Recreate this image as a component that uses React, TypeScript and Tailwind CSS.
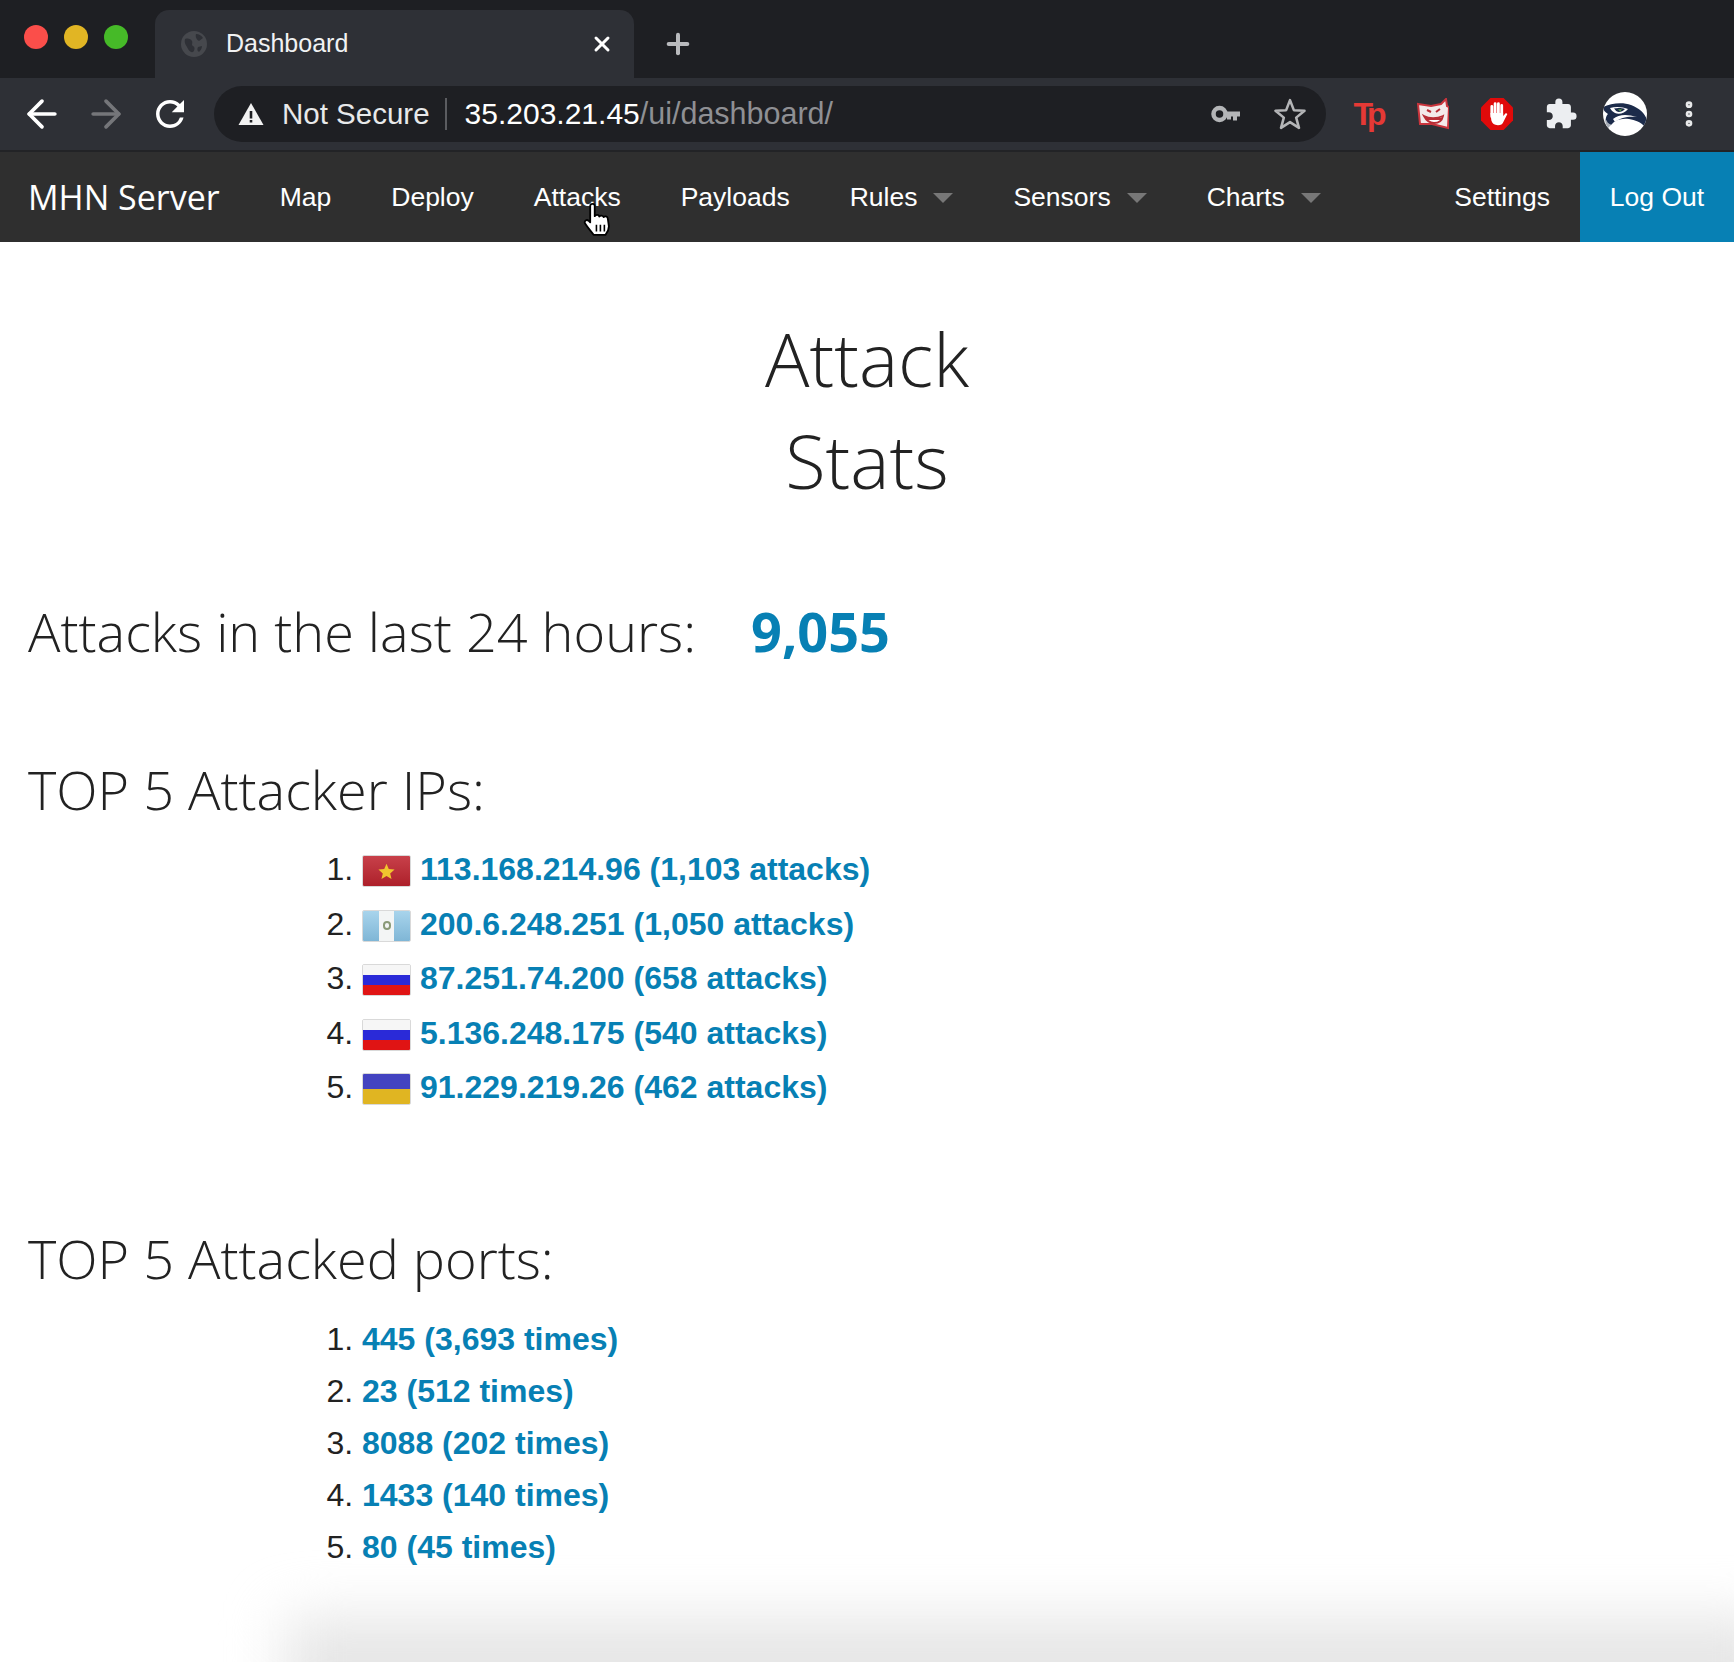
import { ArrowLeft, ArrowRight, Plus, X, EllipsisVertical } from 'lucide-react';
import { MdExtension, MdRefresh } from 'react-icons/md';

const sans = "font-['Liberation_Sans',Arial,sans-serif]";
const open = "font-['Open_Sans',sans-serif]";

const attackers = [
    { flag: 'vn', label: '113.168.214.96 (1,103 attacks)' },
    { flag: 'gt', label: '200.6.248.251 (1,050 attacks)' },
    { flag: 'ru', label: '87.251.74.200 (658 attacks)' },
    { flag: 'ru', label: '5.136.248.175 (540 attacks)' },
    { flag: 'ua', label: '91.229.219.26 (462 attacks)' },
];

const ports = ['445 (3,693 times)', '23 (512 times)', '8088 (202 times)', '1433 (140 times)', '80 (45 times)'];

function Flag({ kind }: { kind: string }) {
    return (
        <span className="relative mr-[9px] inline-block h-[32px] w-[49px] overflow-hidden rounded-[2px] border border-black/15 align-[-7px]">
            {kind === 'vn' && (
                <span className="flex h-full w-full items-center justify-center bg-gradient-to-b from-[#c8404a] to-[#ad1f2a]">
                    <svg width="17" height="17" viewBox="0 0 24 24">
                        <path d="M12 1l3.2 7.600 8.200.7-6.200 5.400 1.900 8L12 18.500l-7.100 4.200 1.900-8L.6 9.300l8.200-.7z" fill="#f0c52e" />
                    </svg>
                </span>
            )}
            {kind === 'gt' && (
                <span className="flex h-full w-full">
                    <span className="flex-1 bg-gradient-to-b from-[#a8d4ec] to-[#7fb6d6]" />
                    <span className="flex flex-1 items-center justify-center bg-[#f3f5f5]">
                        <span className="h-[9px] w-[8px] rounded-full border-2 border-[#8a9a78]" />
                    </span>
                    <span className="flex-1 bg-gradient-to-b from-[#a8d4ec] to-[#7fb6d6]" />
                </span>
            )}
            {kind === 'ru' && (
                <span className="flex h-full w-full flex-col">
                    <span className="flex-1 bg-[#f6f6f6]" />
                    <span className="flex-1 bg-[#2a2ad8]" />
                    <span className="flex-1 bg-[#e01414]" />
                </span>
            )}
            {kind === 'ua' && (
                <span className="flex h-full w-full flex-col">
                    <span className="flex-1 bg-[#4343c0]" />
                    <span className="flex-1 bg-[#e0b522]" />
                </span>
            )}
        </span>
    );
}

function Caret() {
    return <span className="ml-[16px] h-0 w-0 border-x-[10px] border-t-[10px] border-x-transparent border-t-[#777777]" />;
}

function NavItem({ label, caret }: { label: string; caret?: boolean }) {
    return (
        <a className="flex items-center px-[30px] text-white">
            {label}
            {caret && <Caret />}
        </a>
    );
}

function Seahawk() {
    return (
        <svg width="44" height="44" viewBox="0 0 44 44">
            <defs>
                <clipPath id="avatar">
                    <circle cx="22" cy="22" r="22" />
                </clipPath>
            </defs>
            <circle cx="22" cy="22" r="22" fill="#ffffff" />
            <g clipPath="url(#avatar)">
                <path d="M0 15C8 11 20 10 28 13c8 3 14 8 16 15l-2 7c-4-5-10-7-16-8-8-1-14 1-18 6l-4-2c-2-4-1-7 1-9-3-2-5-4-5-7z" fill="#1c2b4a" />
                <path d="M7 16c6-2 13-1 18 1-3 4-9 6-13 4-2-1-4-3-5-5z" fill="#ffffff" />
                <path d="M11 16.500c4-1 8-.5 11 .5-2 2.500-6 3.500-8 2.500-1-.5-2-2-3-3z" fill="#1c2b4a" />
                <path d="M15 17.500l4-.2-1.800 2z" fill="#5fb548" />
                <path d="M10 27c6-5 14-5 24-2-8-1-16 0-22 5z" fill="#ffffff" />
                <path d="M2 26l3 5 3 2-3 3c-2-3-3-6-3-10z" fill="#a7adb6" />
            </g>
        </svg>
    );
}

// hover cursor sitting over the Attacks link
function HandCursor() {
    return (
        <svg className="pointer-events-none absolute left-[583px] top-[202px]" width="28" height="34" viewBox="0 0 24 30">
            <path
                d="M6 3.500c0-2.500 4-2.500 4 0v9c1-1.500 3.500-1.500 4 .3.800-1.300 3.300-1.100 3.800.5 1-1 3.500-.8 3.700 1.200l1 7c0 3-1 5-3 7.500H9c-2-3-5-6-7.500-10-1.200-2 1.300-4 3-2.500L6 18z"
                fill="#ffffff"
                stroke="#000000"
                strokeWidth="1.600"
                strokeLinejoin="round"
            />
            <path d="M11.500 20v6M15 20v6M18.500 20v6" stroke="#000000" strokeWidth="1.400" />
        </svg>
    );
}

export default function App() {
    return (
        <div className={`relative flex h-[1662px] w-[1734px] flex-col overflow-hidden bg-white ${sans}`}>
            {/* tab strip */}
            <div className="flex h-[78px] shrink-0 bg-[#1e1f23] pt-[10px]">
                <div className="mt-[15px] flex h-[24px] w-[155px] shrink-0 items-center gap-[16px] pl-[24px]">
                    <span className="h-[24px] w-[24px] rounded-full bg-[#fb4e4a]" />
                    <span className="h-[24px] w-[24px] rounded-full bg-[#e1b524]" />
                    <span className="h-[24px] w-[24px] rounded-full bg-[#46ba28]" />
                </div>
                <div className="flex h-[68px] w-[479px] items-center rounded-t-[14px] bg-[#2e3036] pl-[26px] pr-[20px]">
                    <svg width="26" height="26" viewBox="0 0 26 26">
                        <circle cx="13" cy="13" r="13" fill="#46484d" />
                        <path d="M4 8c3-1 6 0 7 2s-1 4 1 5 2 4 0 6c-3 1-5-3-6-5S3 12 4 8zM15 3c3 0 6 2 7 4l-4 3c-2-1-4-4-3-7zM17 16l4-1c0 3-2 5-3 6-2-1-2-3-1-5z" fill="#2e3036" />
                    </svg>
                    <span className="ml-[19px] flex-1 text-[25px] text-[#f1f2f3]">Dashboard</span>
                    <X size={24} strokeWidth={3} className="text-white" />
                </div>
                <Plus size={32} strokeWidth={3} className="ml-[28px] mt-[18px] text-[#b9babd]" />
            </div>

            {/* toolbar */}
            <div className="flex h-[74px] shrink-0 items-start border-b-2 border-[#222326] bg-[#2e3036] pl-[20px] pt-[8px]">
                <div className="flex h-[56px] shrink-0 items-center">
                    <ArrowLeft size={44} strokeWidth={2} className="text-white" />
                    <ArrowRight size={44} strokeWidth={2} className="ml-[20px] text-[#75767a]" />
                    <MdRefresh size={42} className="ml-[21px] text-white" />
                </div>
                <div className="ml-[23px] flex h-[56px] w-[1112px] items-center rounded-full bg-[#1e1f23] pl-[24px] pr-[20px]">
                    <svg width="26" height="24" viewBox="0 0 26 24">
                        <path d="M13 1l12.500 22H.5z" fill="#f2f2f2" />
                        <path d="M11.700 9h2.600v7.500h-2.600zM11.700 18h2.600v2.600h-2.600z" fill="#1e1f23" />
                    </svg>
                    <span className="ml-[18px] text-[29.500px] text-[#e8e9ea]">Not Secure</span>
                    <span className="ml-[15px] mr-[18px] h-[32px] w-[2px] bg-[#5b5c60]" />
                    <span className="text-[30px] text-white">
                        35.203.21.45
                        <span className="text-[30.500px] text-[#8f9094]">/ui/dashboard/</span>
                    </span>
                    <span className="flex-1" />
                    <svg width="30" height="18" viewBox="0 0 30 18">
                        <circle cx="8.500" cy="9" r="6" fill="none" stroke="#b4b5b7" strokeWidth="4.500" />
                        <path d="M14 6.500h15v5h-3v4h-4v-4h-2v3h-4v-3h-2z" fill="#b4b5b7" />
                    </svg>
                    <svg className="ml-[33px]" width="32" height="32" viewBox="0 0 30 30">
                        <path d="M15 2l3.600 9.400 10 .6-7.800 6.400 2.600 9.600-8.400-5.400-8.400 5.400 2.600-9.600L1.400 12l10-.6z" fill="none" stroke="#b4b5b7" strokeWidth="2.400" strokeLinejoin="round" />
                    </svg>
                </div>
                <div className="flex h-[56px] flex-1 items-center">
                    <span className="ml-[24px] flex h-[40px] w-[34px] items-center justify-center text-[32px] font-bold tracking-[-6px] text-[#e53935]">Tp</span>
                    <svg className="ml-[33px]" width="32" height="32" viewBox="0 0 32 32">
                        <path d="M1 6l13 2 10-2 5-5 1 7 2 1-1 21-16-4-12 0z" fill="#f3e9e9" stroke="#c9343c" strokeWidth="2" />
                        <path d="M7 18c5 3 13 3 19 0-1 5-5 7-9 7s-8-3-10-7z" fill="#ffffff" stroke="#b82c34" strokeWidth="1.800" />
                        <path d="M10 12l4 2M23 11l-4 3M9 21h16" stroke="#b82c34" strokeWidth="2" />
                    </svg>
                    <svg className="ml-[32px]" width="32" height="32" viewBox="0 0 34 34">
                        <path d="M10 0h14l10 10v14L24 34H10L0 24V10z" fill="#e00a0a" />
                        <path d="M11.500 9v11M15 6v11M18.500 6v11M22 8v10" stroke="#ffffff" strokeWidth="3" strokeLinecap="round" />
                        <path d="M10 16h13.500v3l3-3 1.500 1-4 8c-1 3-3 4-6 4-4 0-6-2-7-5z" fill="#ffffff" />
                    </svg>
                    <MdExtension size={34} className="ml-[31px] text-[#eceef1]" />
                    <span className="ml-[25px] flex">
                        <Seahawk />
                    </span>
                    <EllipsisVertical size={32} strokeWidth={3} className="ml-[26px] text-[#e8e9ea]" />
                </div>
            </div>

            {/* nav */}
            <nav className="flex h-[90px] shrink-0 items-stretch bg-[#2f2f2f] pt-px text-[26.500px]">
                <a className={`flex items-center pl-[28px] text-[34px] text-white ${open}`}>MHN Server</a>
                <div className="ml-[30px] flex items-stretch">
                    <NavItem label="Map" />
                    <NavItem label="Deploy" />
                    <NavItem label="Attacks" />
                    <NavItem label="Payloads" />
                    <NavItem label="Rules" caret />
                    <NavItem label="Sensors" caret />
                    <NavItem label="Charts" caret />
                </div>
                <div className="flex-1" />
                <NavItem label="Settings" />
                <a className="-mt-px flex w-[154px] items-center justify-center bg-[#0780b4] pt-px text-white">Log Out</a>
            </nav>

            <main className="flex-1 text-[#222222]">
                <h1 className={`mx-auto mt-[66px] w-[400px] text-center text-[74px] font-light leading-[102px] ${open}`}>
                    Attack
                    <br />
                    Stats
                </h1>
                <div className={`mt-[83px] flex items-center pl-[28px] text-[54px] font-light leading-[72px] ${open}`}>
                    Attacks in the last 24 hours:
                    <b className="ml-[55px] font-bold text-[#0780b4]">9,055</b>
                </div>
                <h2 className={`mt-[86px] pl-[28px] text-[54px] font-light leading-[72px] ${open}`}>TOP 5 Attacker IPs:</h2>
                <ol className="mt-[17px] list-decimal pl-[362px] text-[32px] leading-[54.500px]">
                    {attackers.map((a) => (
                        <li key={a.label}>
                            <Flag kind={a.flag} />
                            <a className="font-bold text-[#0780b4]">{a.label}</a>
                        </li>
                    ))}
                </ol>
                <h2 className={`mt-[107px] pl-[28px] text-[54px] font-light leading-[72px] ${open}`}>TOP 5 Attacked ports:</h2>
                <ol className="mt-[19px] list-decimal pl-[362px] text-[32px] leading-[52px]">
                    {ports.map((p) => (
                        <li key={p}>
                            <a className="font-bold text-[#0780b4]">{p}</a>
                        </li>
                    ))}
                </ol>
            </main>

            <HandCursor />

            {/* soft shadow coming up from the next window at the bottom */}
            <div className="pointer-events-none absolute bottom-[-60px] left-[285px] right-[-40px] h-[105px] rounded-[10px] bg-[#e6e6e6] blur-[28px]" />
        </div>
    );
}
